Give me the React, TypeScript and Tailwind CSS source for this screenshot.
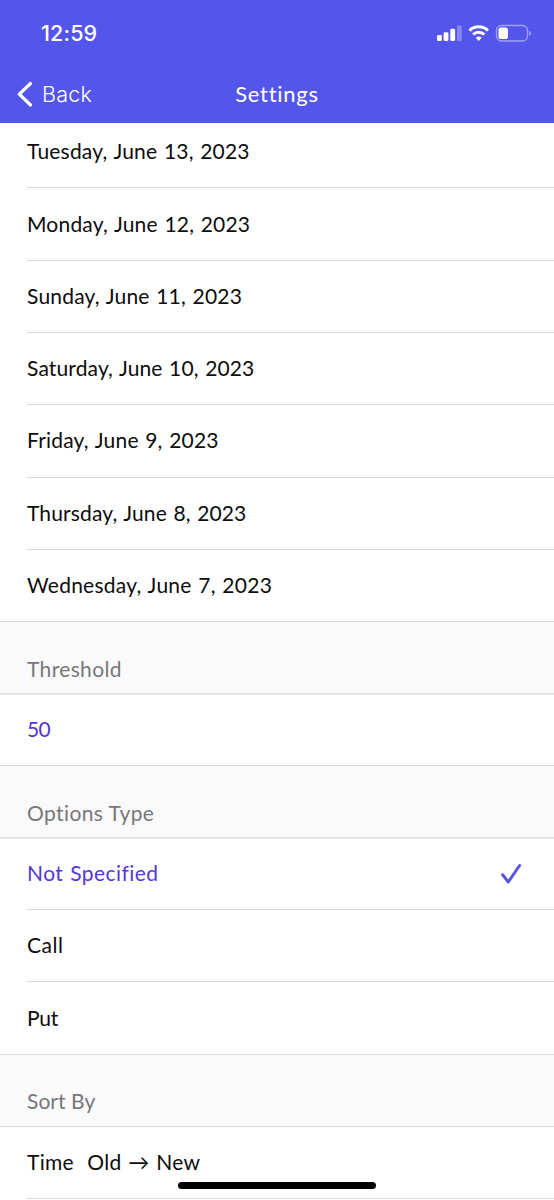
type Row = {
  label: string;
  height: string;
  tracking?: string;
  selected?: boolean;
  checked?: boolean;
};

const dates: Row[] = [
  { label: "Tuesday, June 13, 2023", height: "h-[65px] pb-[21px]" },
  { label: "Monday, June 12, 2023", height: "h-[73px] pb-[21px]" },
  { label: "Sunday, June 11, 2023", height: "h-[72px] pb-[21px]" },
  { label: "Saturday, June 10, 2023", height: "h-[72px] pb-[21px]", tracking: "tracking-[0.14px]" },
  { label: "Friday, June 9, 2023", height: "h-[73px] pb-[22px]" },
  { label: "Thursday, June 8, 2023", height: "h-[72px] pb-[21px]", tracking: "tracking-[0.14px]" },
  { label: "Wednesday, June 7, 2023", height: "h-[72px] pb-[21px]", tracking: "tracking-[0.25px]" },
];

const optionTypes: Row[] = [
  {
    label: "Not Specified",
    height: "h-[71px] pb-[21px]",
    tracking: "tracking-[0.45px]",
    selected: true,
    checked: true,
  },
  { label: "Call", height: "h-[72px] pb-[21px]", tracking: "tracking-[0.5px]" },
  { label: "Put", height: "h-[73px] pb-[21px]", tracking: "tracking-[-0.2px]" },
];

function Check() {
  return (
    <svg className="mb-[2px]" width="24" height="24" viewBox="0 0 24 24" fill="none">
      <path
        d="M3.6 12.8L9.3 20L20.6 3.5"
        stroke="#5a55e3"
        strokeWidth="3"
        strokeLinecap="round"
        strokeLinejoin="round"
      />
    </svg>
  );
}

function ListRow({ row, last }: { row: Row; last?: boolean }) {
  return (
    <li className={last ? "" : "pl-[27px]"}>
      <div
        className={`flex items-end justify-between border-b border-[#d9d9d9] pr-[31px] [word-spacing:1px] ${row.height} ${
          row.tracking ?? "tracking-[0.2px]"
        } ${last ? "pl-[27px]" : ""} ${row.selected ? "text-[#5536d6]" : "text-[#0c0c0c]"}`}
      >
        <span className="whitespace-pre">{row.label}</span>
        {row.checked && <Check />}
      </div>
    </li>
  );
}

function SectionHeader({ title, size }: { title: string; size: string }) {
  return (
    <h2 className={`flex items-end bg-[#fafafa] pl-[27px] text-[#77777a] ${size}`}>
      {title}
    </h2>
  );
}

function StatusIcons() {
  return (
    <svg width="96" height="20" viewBox="0 0 96 20" fill="none">
      <g fill="#fff">
        <rect x="1" y="12" width="4.8" height="6" rx="1.3" />
        <rect x="7.6" y="9.2" width="4.8" height="8.8" rx="1.3" />
        <rect x="14.3" y="5.8" width="4.8" height="12.2" rx="1.3" />
        <rect x="21" y="2.5" width="4.8" height="15.5" rx="1.3" opacity="0.28" />
      </g>
      <g stroke="#fff" strokeWidth="3">
        <path d="M33.5 7.6a13.2 13.2 0 0 1 18.4 0" />
        <path d="M37.1 11.5a8 8 0 0 1 11.2 0" />
      </g>
      <path d="M42.7 17.9l-2.9-3.2a4.5 4.5 0 0 1 5.8 0z" fill="#fff" />
      <rect x="60.5" y="2.5" width="31" height="15.5" rx="4.8" stroke="#fff" strokeOpacity="0.45" strokeWidth="1.3" />
      <rect x="62.5" y="4.5" width="9.5" height="11.5" rx="2.6" fill="#fff" />
      <path d="M93.3 7.8v5c1-.4 1.6-1.4 1.6-2.5s-.6-2.1-1.6-2.5z" fill="#fff" opacity="0.5" />
    </svg>
  );
}

export default function App() {
  return (
    <div className="relative h-[1200px] overflow-hidden bg-white font-[Lato,sans-serif] text-[21px] leading-[30px]">
      <header className="h-[123px] bg-[#5456eb] text-white">
        <div className="flex h-[66px] items-center justify-between pl-[41px] pr-[22px]">
          <span className="font-[Inter,sans-serif] text-[21.5px] font-medium tracking-[0.15px]">12:59</span>
          <StatusIcons />
        </div>
        <div className="grid grid-cols-3 items-center pt-[13px]">
          <div className="flex items-center gap-[9px] pl-4">
            <svg width="17" height="26" viewBox="0 0 17 26" fill="none">
              <path
                d="M14.5 2.5L3.3 13.2L14.5 24"
                stroke="#fff"
                strokeWidth="3.2"
                strokeLinecap="round"
                strokeLinejoin="round"
              />
            </svg>
            <span className="font-[Inter,sans-serif] text-[21.5px] font-light tracking-[0.2px]">Back</span>
          </div>
          <h1 className="text-center text-[22px] tracking-[0.75px]">Settings</h1>
        </div>
      </header>
      <ul>
        {dates.map((row, i) => (
          <ListRow key={row.label} row={row} last={i === dates.length - 1} />
        ))}
      </ul>
      <SectionHeader title="Threshold" size="h-[73px] border-b-2 border-[#e3e3e3] pb-[9px] tracking-[0.35px]" />
      <ul>
        <ListRow
          row={{ label: "50", height: "h-[71px] pb-[21px]", tracking: "tracking-[-0.6px]", selected: true }}
          last
        />
      </ul>
      <SectionHeader title="Options Type" size="h-[73px] border-b-2 border-[#e3e3e3] pb-[9px] tracking-[0.4px]" />
      <ul>
        {optionTypes.map((row, i) => (
          <ListRow key={row.label} row={row} last={i === optionTypes.length - 1} />
        ))}
      </ul>
      <SectionHeader title="Sort By" size="h-[72px] border-b border-[#d9d9d9] pb-[10px] tracking-[0.05px]" />
      <ul>
        <ListRow row={{ label: "Time  Old → New", height: "h-[72px] pb-[21px]", tracking: "tracking-[0.3px]" }} />
      </ul>
      {/* home indicator */}
      <div className="absolute left-[178px] top-[1182px] h-[7px] w-[198px] rounded-full bg-black" />
    </div>
  );
}
